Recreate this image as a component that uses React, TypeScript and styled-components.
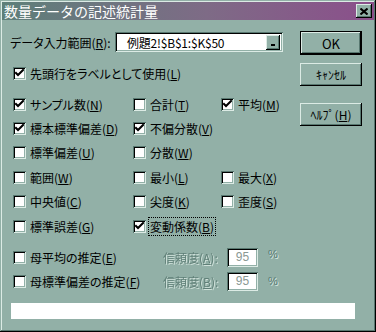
import { createGlobalStyle, styled } from "styled-components";

const FACE = "#92b0a7";
const LIGHT = "#dcebe5";
const SHADOW = "#587870";

const GlobalStyle = createGlobalStyle`
    html, body {
        margin: 0;
        padding: 0;
        background: ${FACE};
    }
    body {
        font-family: "Noto Sans CJK JP", "Liberation Sans", sans-serif;
        font-size: 12px;
        color: #000;
    }
`

const Window = styled.div`
    box-sizing: border-box;
    width: 376px;
    height: 332px;
    padding: 2px;
    background: ${FACE};
    box-shadow:
        inset -1px -1px 0 #000,
        inset 1px 1px 0 ${FACE},
        inset -2px -2px 0 ${SHADOW},
        inset 2px 2px 0 ${LIGHT};
    display: flex;
    flex-direction: column;
`

const TitleBar = styled.div`
    height: 18px;
    background: linear-gradient(to right, #5d7f79, #7e6b86 55%, #8b4f8b);
    display: flex;
    align-items: center;
    justify-content: space-between;
    padding: 0 2px 0 2px;
`

const TitleText = styled.span`
    color: #fff;
    font-size: 14px;
    line-height: 18px;
`

const CloseButton = styled.div`
    width: 16px;
    height: 14px;
    background: ${FACE};
    box-shadow:
        inset -1px -1px 0 #000,
        inset 1px 1px 0 ${LIGHT},
        inset -2px -2px 0 ${SHADOW};
    display: flex;
    align-items: center;
    justify-content: center;
`

const Content = styled.div`
    display: flex;
    flex-direction: column;
`

const Main = styled.div`
    display: flex;
    align-items: flex-start;
`

const LeftCol = styled.div`
    width: 287px;
    padding-left: 11px;
    box-sizing: border-box;
    display: flex;
    flex-direction: column;
`

const ButtonCol = styled.div`
    margin-top: 11px;
    margin-left: 11px;
    width: 62px;
    display: flex;
    flex-direction: column;
`

const InputRow = styled.div`
    margin-top: 12px;
    margin-left: -3px;
    height: 20px;
    display: flex;
    align-items: center;
`

const InputLabel = styled.span`
    width: 105px;
    font-feature-settings: "palt";
`

const EditBox = styled.div`
    box-sizing: border-box;
    width: 168px;
    height: 20px;
    background: #fff;
    box-shadow:
        inset 1px 1px 0 ${SHADOW},
        inset -1px -1px 0 ${LIGHT},
        inset 2px 2px 0 #000,
        inset -2px -2px 0 ${FACE};
    display: flex;
    align-items: center;
    justify-content: space-between;
    padding: 0 3px 0 12px;
`

const EditText = styled.span`
    font-size: 12px;
    letter-spacing: -0.2px;
`

const CollapseButton = styled.div`
    width: 14px;
    height: 15px;
    background: ${FACE};
    box-shadow:
        inset -1px -1px 0 #000,
        inset 1px 1px 0 ${LIGHT},
        inset -2px -2px 0 ${SHADOW};
    display: flex;
    align-items: flex-end;
    justify-content: center;
    padding-bottom: 4px;
    box-sizing: border-box;

    &::after {
        content: "";
        width: 4px;
        height: 2px;
        background: #000;
    }
`

const Row = styled.div<{ height?: number }>`
    height: ${props => props.height ?? 24}px;
    display: flex;
    align-items: center;
`

const HeaderRow = styled(Row)`
    margin-top: 9px;
`

const StatGrid = styled.div`
    margin-top: 7px;
    display: grid;
    grid-template-columns: 120px 88px auto;
    grid-auto-rows: 24.4px;
`

const EstimateBlock = styled.div`
    margin-top: 7px;
    display: flex;
    flex-direction: column;
`

const Check = styled.label`
    display: flex;
    align-items: center;
    gap: 4px;
    white-space: nowrap;
    font-feature-settings: "palt";
`

const Box = styled.span`
    flex: none;
    width: 13px;
    height: 13px;
    background: #fff;
    box-shadow:
        inset 1px 1px 0 ${SHADOW},
        inset -1px -1px 0 ${LIGHT},
        inset 2px 2px 0 #000,
        inset -2px -2px 0 ${FACE};
    display: flex;
    align-items: center;
    justify-content: center;
`

const CheckLabel = styled.span<{ focused?: boolean }>`
    border: 1px dotted ${props => props.focused ? "#000" : "transparent"};
    padding: 0 1px;
    margin-left: -2px;
`

const EstimateCheck = styled.div`
    width: 150px;
`

const DisabledLabel = styled.span`
    width: 64px;
    color: ${SHADOW};
    text-shadow: 1px 1px 0 ${LIGHT};
    font-feature-settings: "palt";
    opacity: 0.85;
`

const SmallEdit = styled.div`
    box-sizing: border-box;
    width: 31px;
    height: 19px;
    background: #fff;
    color: #8a9893;
    box-shadow:
        inset 1px 1px 0 ${SHADOW},
        inset -1px -1px 0 ${LIGHT},
        inset 2px 2px 0 #000,
        inset -2px -2px 0 ${FACE};
    display: flex;
    align-items: center;
    justify-content: center;
    font-family: "Liberation Sans", sans-serif;
    font-size: 12px;
`

const Percent = styled.span<{ raised?: boolean }>`
    margin-left: 10px;
    font-family: "Liberation Sans", sans-serif;
    font-size: 11px;
    color: ${SHADOW};
    text-shadow: 1px 1px 0 ${LIGHT};
    align-self: ${props => props.raised ? "flex-start" : "center"};
    margin-top: ${props => props.raised ? "3px" : "0"};
`

const Button = styled.div<{ isDefault?: boolean; top: number }>`
    box-sizing: border-box;
    margin-top: ${props => props.top}px;
    width: 62px;
    height: ${props => props.isDefault ? 24 : 23}px;
    background: ${FACE};
    display: flex;
    align-items: center;
    justify-content: center;
    box-shadow: ${props => props.isDefault
        ? `inset 0 0 0 1px #000, inset -2px -2px 0 #000, inset 2px 2px 0 ${LIGHT}, inset -3px -3px 0 ${SHADOW}`
        : `inset -1px -1px 0 #000, inset 1px 1px 0 ${LIGHT}, inset -2px -2px 0 ${SHADOW}`};
    font-size: 12px;
`

const OkText = styled.span`
    font-size: 13px;
`

const StatusBar = styled.div`
    margin: 10px 0 0 9px;
    width: 344px;
    height: 16px;
    background: #fff;
`

const CheckMark = () => (
    <svg width="9" height="9" viewBox="0 0 9 9">
        <path d="M1 4 L3 6 L8 1" stroke="#000" strokeWidth="2" fill="none" strokeLinecap="square" />
    </svg>
);

type ItemProps = { label: string; key_: string; checked?: boolean; focused?: boolean };

const Item = ({ label, key_, checked, focused }: ItemProps) => (
    <Check>
        <Box>{checked && <CheckMark />}</Box>
        <CheckLabel focused={focused}>
            {label}(<u>{key_}</u>)
        </CheckLabel>
    </Check>
);

const stats: (ItemProps | null)[] = [
    { label: "サンプル数", key_: "N", checked: true },
    { label: "合計", key_: "T" },
    { label: "平均", key_: "M", checked: true },
    { label: "標本標準偏差", key_: "D", checked: true },
    { label: "不偏分散", key_: "V", checked: true },
    null,
    { label: "標準偏差", key_: "U" },
    { label: "分散", key_: "W" },
    null,
    { label: "範囲", key_: "W" },
    { label: "最小", key_: "L" },
    { label: "最大", key_: "X" },
    { label: "中央値", key_: "C" },
    { label: "尖度", key_: "K" },
    { label: "歪度", key_: "S" },
    { label: "標準誤差", key_: "G" },
    { label: "変動係数", key_: "B", checked: true, focused: true },
    null,
];

export default function App() {
    return (
        <>
            <GlobalStyle />
            <Window>
                <TitleBar>
                    <TitleText>数量データの記述統計量</TitleText>
                    <CloseButton>
                        <svg width="8" height="7" viewBox="0 0 8 7">
                            <path d="M0.5 0.5 L7.5 6.5 M7.5 0.5 L0.5 6.5" stroke="#000" strokeWidth="2" />
                        </svg>
                    </CloseButton>
                </TitleBar>
                <Content>
                    <Main>
                        <LeftCol>
                            <InputRow>
                                <InputLabel>データ入力範囲(<u>R</u>):</InputLabel>
                                <EditBox>
                                    <EditText>例題2!$B$1:$K$50</EditText>
                                    <CollapseButton />
                                </EditBox>
                            </InputRow>
                            <HeaderRow>
                                <Item label="先頭行をラベルとして使用" key_="L" checked />
                            </HeaderRow>
                            <StatGrid>
                                {stats.map((s, i) =>
                                    s ? <Row key={i} height={24.4}><Item {...s} /></Row> : <span key={i} />
                                )}
                            </StatGrid>
                            <EstimateBlock>
                                <Row>
                                    <EstimateCheck><Item label="母平均の推定" key_="E" /></EstimateCheck>
                                    <DisabledLabel>信頼度(<u>A</u>):</DisabledLabel>
                                    <SmallEdit>95</SmallEdit>
                                    <Percent raised>%</Percent>
                                </Row>
                                <Row>
                                    <EstimateCheck><Item label="母標準偏差の推定" key_="F" /></EstimateCheck>
                                    <DisabledLabel>信頼度(<u>B</u>):</DisabledLabel>
                                    <SmallEdit>95</SmallEdit>
                                    <Percent>%</Percent>
                                </Row>
                            </EstimateBlock>
                        </LeftCol>
                        <ButtonCol>
                            <Button isDefault top={0}><OkText>OK</OkText></Button>
                            <Button top={8}>ｷｬﾝｾﾙ</Button>
                            <Button top={17}>ﾍﾙﾌﾟ(<u>H</u>)</Button>
                        </ButtonCol>
                    </Main>
                    <StatusBar />
                </Content>
            </Window>
        </>
    );
}
